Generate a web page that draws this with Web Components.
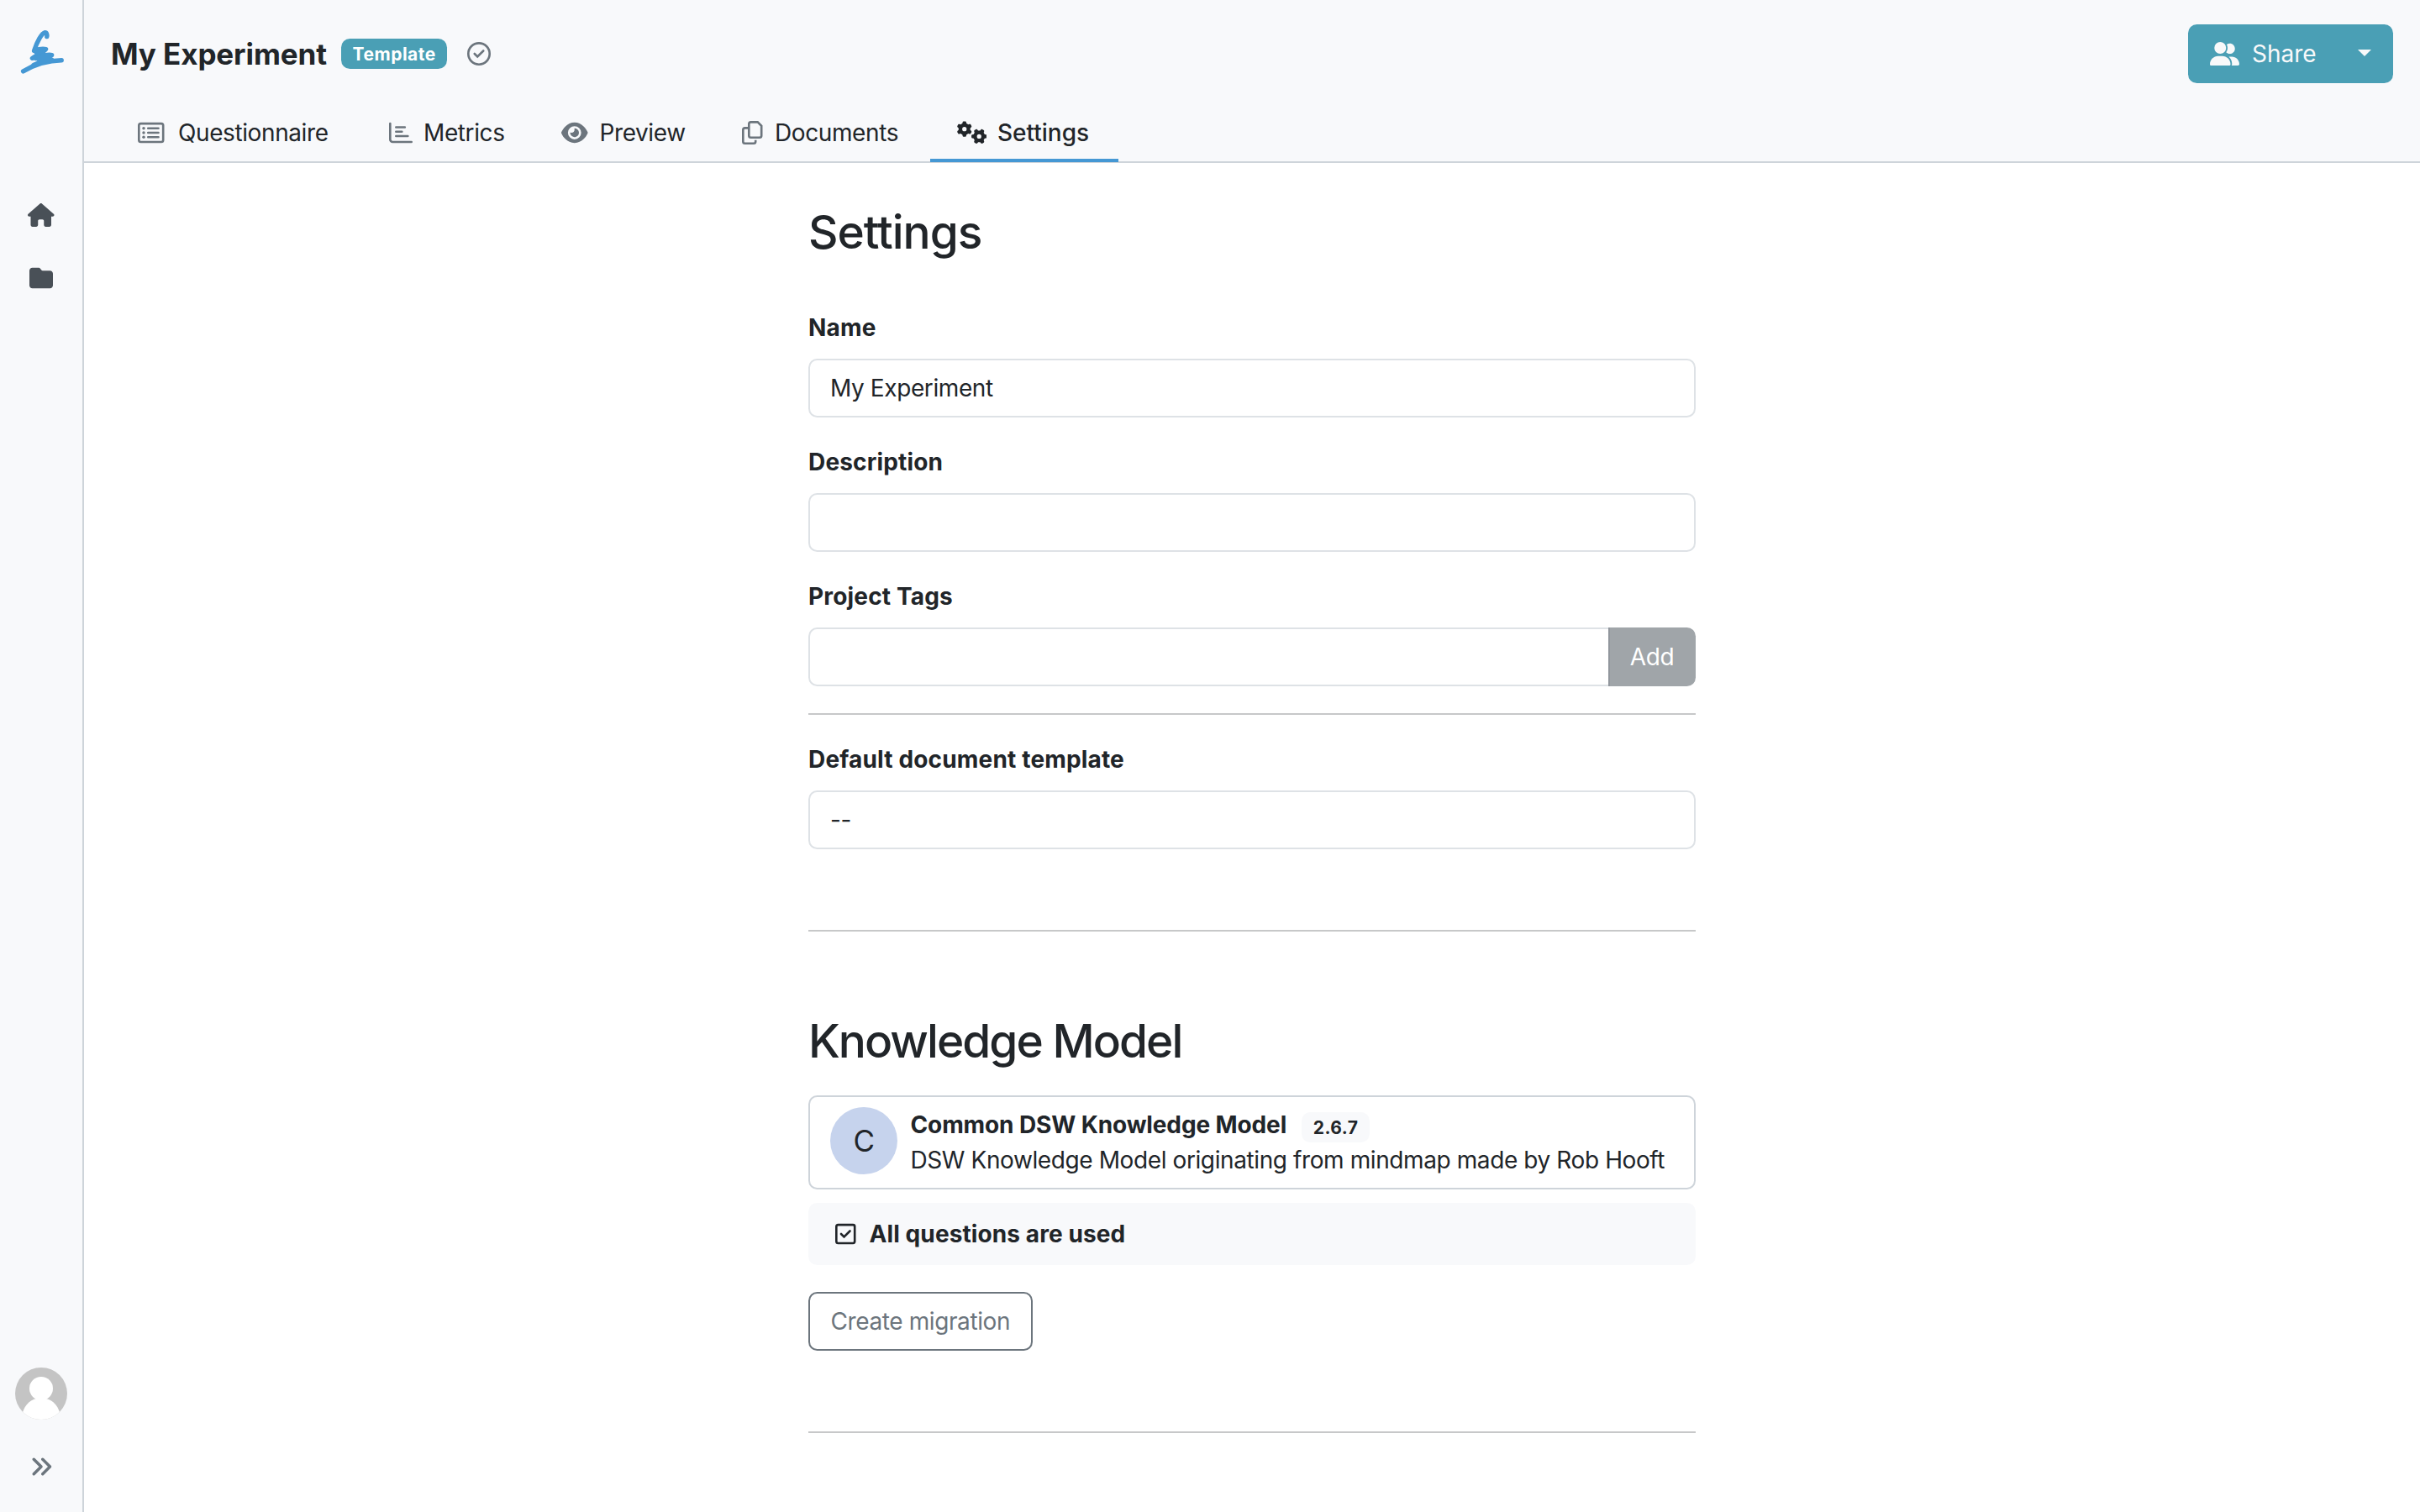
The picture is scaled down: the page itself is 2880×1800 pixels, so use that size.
<!DOCTYPE html>
<html lang="en">
<head>
<meta charset="utf-8">
<title>My Experiment</title>
<style>
    :root {
        --light: #f8f9fb;
        --line: #ced4da;
        --field: #dee2e6;
        --gray: #6c757d;
        --dark: #212529;
        --teal: #4a9fb5;
        --blue: #4598d4;
    }

    body {
        margin: 0;
        height: 1800px;
        overflow: hidden;
        background: #fff;
        color: var(--dark);
        font: 400 28px/42px Inter, "Liberation Sans", sans-serif;
        letter-spacing: -0.4px;
    }
</style>
</head>
<body>
<app-layout>
    <side-bar slot="side"></side-bar>
    <project-header slot="header" name="My Experiment" badge="Template">
        <nav-tab icon="list" style="width: 295px; --gap: 16.5px">Questionnaire</nav-tab>
        <nav-tab icon="chart" style="width: 201px">Metrics</nav-tab>
        <nav-tab icon="eye" style="width: 211px; --gap: 14px">Preview</nav-tab>
        <nav-tab icon="copy" style="width: 252px; --gap: 14.5px">Documents</nav-tab>
        <nav-tab icon="gears" style="width: 224px" active>Settings</nav-tab>
    </project-header>

    <section-title style="margin-bottom: 59px; letter-spacing: -1px">Settings</section-title>
    <form-field label="Name" value="My Experiment"></form-field>
    <form-field label="Description"></form-field>
    <form-field label="Project Tags" action="Add"></form-field>
    <line-break style="margin-bottom: 32px"></line-break>
    <form-field label="Default document template" value="--"></form-field>
    <line-break style="margin: 96px 0"></line-break>

    <section-title style="margin-bottom: 31px; letter-spacing: -1.95px">Knowledge Model</section-title>
    <model-card letter="C" name="Common DSW Knowledge Model" version="2.6.7">DSW Knowledge Model originating from mindmap made by Rob Hooft</model-card>
    <info-bar icon="square-check">All questions are used</info-bar>
    <outline-button>Create migration</outline-button>
    <line-break style="margin-top: 96px"></line-break>
</app-layout>

<script>
const gear = "M308.5 135.3c7.1-6.3 9.9-16.2 6.2-25c-2.3-5.3-4.8-10.5-7.6-15.5L304 89.4c-3-5-6.3-9.9-9.8-14.6c-5.7-7.6-15.7-10.1-24.7-7.1l-28.2 9.3c-10.7-8.8-23-16-36.2-20.9L199 27.1c-1.9-9.3-9.1-16.7-18.5-17.8C173.9 8.4 167.2 8 160.4 8h-.7c-6.8 0-13.5 .4-20.1 1.2c-9.4 1.1-16.6 8.6-18.5 17.8L115 56.1c-13.3 5-25.5 12.1-36.2 20.9L50.5 67.8c-9-3-19-.5-24.7 7.1c-3.5 4.7-6.8 9.6-9.9 14.6l-3 5.3c-2.8 5-5.3 10.2-7.6 15.6c-3.7 8.7-.9 18.6 6.2 25l22.2 19.8C32.6 161.9 32 168.9 32 176s.6 14.1 1.7 20.9L11.5 216.7c-7.1 6.3-9.9 16.2-6.2 25c2.3 5.3 4.8 10.5 7.6 15.6l3 5.2c3 5.1 6.3 9.9 9.9 14.6c5.7 7.6 15.7 10.1 24.7 7.1l28.2-9.3c10.7 8.8 23 16 36.2 20.9l6.1 29.1c1.9 9.3 9.1 16.7 18.5 17.8c6.7 .8 13.5 1.2 20.4 1.2s13.7-.4 20.4-1.2c9.4-1.1 16.6-8.6 18.5-17.8l6.1-29.1c13.3-5 25.5-12.1 36.2-20.9l28.2 9.3c9 3 19 .5 24.7-7.1c3.5-4.7 6.8-9.5 9.8-14.6l3.1-5.4c2.8-5 5.3-10.2 7.6-15.5c3.7-8.7 .9-18.6-6.2-25l-22.2-19.8c1.1-6.8 1.7-13.8 1.7-20.9s-.6-14.1-1.7-20.9l22.2-19.8zM112 176a48 48 0 1 1 96 0 48 48 0 1 1 -96 0z";
const line = 'fill="none" stroke="currentColor" stroke-width="48"';

// [viewBox width, markup], every icon is 512 units high
const icons = {
    "house": [576, '<path d="M575.8 255.5c0 18-15 32.1-32 32.1h-32l.7 160.2c0 2.7-.2 5.4-.5 8.1V472c0 22.1-17.9 40-40 40H456c-1.1 0-2.2 0-3.3-.1c-1.4 .1-2.8 .1-4.2 .1H416 392c-22.1 0-40-17.9-40-40V448 384c0-17.7-14.3-32-32-32H256c-17.7 0-32 14.3-32 32v64 24c0 22.1-17.9 40-40 40H160 128.1c-1.5 0-3-.1-4.5-.2c-1.2 .1-2.4 .2-3.6 .2H104c-22.1 0-40-17.9-40-40V360c0-.9 0-1.9 .1-2.8V287.6H32c-18 0-32-14-32-32.1c0-9 3-17 10-24L266.4 8c7-7 15-8 22-8s15 2 21 7L564.8 231.5c8 7 12 15 11 24z"/>'],
    "folder": [512, '<path d="M64 480H448c35.3 0 64-28.7 64-64V160c0-35.3-28.7-64-64-64H288c-10.1 0-19.6-4.7-25.6-12.8L243.2 57.6C231.1 41.5 212.1 32 192 32H64C28.7 32 0 60.7 0 96V416c0 35.3 28.7 64 64 64z"/>'],
    "angles": [512, '<path d="M470.6 278.6c12.5-12.5 12.5-32.8 0-45.3l-160-160c-12.5-12.5-32.8-12.5-45.3 0s-12.5 32.8 0 45.3L402.7 256 265.4 393.4c-12.5 12.5-12.5 32.8 0 45.3s32.8 12.5 45.3 0l160-160zm-352 160l160-160c12.5-12.5 12.5-32.8 0-45.3l-160-160c-12.5-12.5-32.8-12.5-45.3 0s-12.5 32.8 0 45.3L210.7 256 73.4 393.4c-12.5 12.5-12.5 32.8 0 45.3s32.8 12.5 45.3 0z"/>'],
    "users": [640, '<path d="M96 128a128 128 0 1 1 256 0A128 128 0 1 1 96 128zM0 482.3C0 383.8 79.8 304 178.3 304h91.4C368.2 304 448 383.8 448 482.3c0 16.4-13.3 29.7-29.7 29.7H29.7C13.3 512 0 498.7 0 482.3zM609.3 512H471.4c5.4-9.4 8.6-20.3 8.6-32v-8c0-60.7-27.1-115.2-69.8-151.8c2.4-.1 4.7-.2 7.1-.2h61.4C567.8 320 640 392.2 640 481.3c0 17-13.8 30.7-30.7 30.7zM432 256c-31 0-59-12.6-79.3-32.9C372.4 196.5 384 163.6 384 128c0-26.8-6.6-52.1-18.3-74.3C384.3 40.1 407.2 32 432 32c61.9 0 112 50.1 112 112s-50.1 112-112 112z"/>'],
    "eye": [576, '<path d="M288 32c-80.8 0-145.5 36.8-192.6 80.6C48.6 156 17.3 208 2.5 243.7c-3.3 7.9-3.3 16.7 0 24.6C17.3 304 48.6 356 95.4 399.4C142.5 443.2 207.2 480 288 480s145.5-36.8 192.6-80.6c46.8-43.5 78.1-95.4 93-131.1c3.3-7.9 3.3-16.7 0-24.6c-14.9-35.7-46.2-87.7-93-131.1C433.5 68.8 368.8 32 288 32zM144 256a144 144 0 1 1 288 0 144 144 0 1 1 -288 0zm144-64c0 35.3-28.7 64-64 64c-7.1 0-13.9-1.2-20.3-3.3c-5.5-1.8-11.9 1.6-11.7 7.4c.3 6.9 1.3 13.8 3.2 20.7c13.7 51.2 66.4 81.6 117.6 67.9s81.6-66.4 67.9-117.6c-11.1-41.5-47.8-69.4-88.6-71.1c-5.8-.2-9.2 6.1-7.4 11.7c2.1 6.4 3.3 13.2 3.3 20.3z"/>'],
    "gears": [640, `<path d="${gear}"/><path transform="translate(480 336) rotate(90) translate(-160 -176)" d="${gear}"/>`],
    "list": [576, `<rect x="24" y="56" width="528" height="400" rx="40" ${line}/><circle cx="128" cy="160" r="32"/><circle cx="128" cy="256" r="32"/><circle cx="128" cy="352" r="32"/><path ${line} stroke-linecap="round" d="M224 160H448M224 256H448M224 352H448"/>`],
    "chart": [512, `<path ${line} stroke-linecap="round" d="M24 56V400a56 56 0 0 0 56 56H488M152 136H344M152 232H280M152 328H408"/>`],
    "copy": [448, `<path ${line} d="M192 24H342L424 106V320a40 40 0 0 1-40 40H192a40 40 0 0 1-40-40V64a40 40 0 0 1 40-40zM128 152H64a40 40 0 0 0-40 40V448a40 40 0 0 0 40 40H256a40 40 0 0 0 40-40V416"/>`],
    "circle-check": [512, `<circle cx="256" cy="256" r="232" ${line}/><path ${line} stroke-linecap="round" d="M160 256L224 320L352 192"/>`],
    "square-check": [448, `<rect x="24" y="56" width="400" height="400" rx="40" ${line}/><path ${line} stroke-linecap="round" d="M128 256L192 320L320 192"/>`],
};

class Base extends HTMLElement {
    connectedCallback() {
        if (this.shadowRoot) {return}
        const shadow = this.attachShadow({ mode: "open" });
        const template = document.createElement("template");
        template.innerHTML = this.render();
        shadow.append(template.content.cloneNode(true));
    }

    attr(name) {
        return this.getAttribute(name) || "";
    }
}

class UiIcon extends Base {
    render() {
        const [width, markup] = icons[this.attr("name")];
        return `
<style>
    :host { display: block; flex: none; font-size: 28px; }
    svg { display: block; height: 1em; width: ${width / 512}em; }
</style>
<svg viewBox="0 0 ${width} 512" fill="currentColor">${markup}</svg>`;
    }
}

class AppLayout extends Base {
    render() {
        return `
<style>
    :host { display: grid; grid-template-columns: 100px 1fr; height: 1800px; }
    .page { display: flex; flex-direction: column; min-width: 0; }
    main { width: 1056px; margin: 0 auto; padding-top: 48px; }
</style>
<slot name="side"></slot>
<div class="page">
    <slot name="header"></slot>
    <main><slot></slot></main>
</div>`;
    }
}

class SideBar extends Base {
    render() {
        return `
<style>
    :host {
        display: flex;
        flex-direction: column;
        align-items: center;
        box-sizing: border-box;
        height: 1800px;
        padding: 34px 0 40px;
        background: var(--light);
        border-right: 2px solid var(--line);
        color: #495057;
    }
    .logo { width: 54px; height: 56px; margin-left: 2px; }
    nav { display: flex; flex-direction: column; align-items: center; gap: 47px; margin-top: 152px; }
    .bottom { display: flex; flex-direction: column; align-items: center; gap: 42px; margin-top: auto; color: var(--gray); }
    .avatar { display: block; width: 62px; height: 62px; }
</style>
<svg class="logo" viewBox="23 34 54 56" fill="none" stroke="var(--blue)" stroke-width="5.4" stroke-linecap="round" stroke-linejoin="round">
    <path d="M55.8 43.6C56.2 41 55.5 38.6 53.6 38.6C49.5 39.5 44 50 40.6 60.4C45 58.8 51 57.6 54.6 58.6C52 62.4 43 66.4 38.4 69.4C45 68 56 63.9 61.6 65.6C58 68.6 51 70.8 46.5 74"/>
    <path d="M73.2 71.8C56 72 43 76 27.6 84.8"/>
    <path d="M62 71.4C53 72 46 74.6 40 77.5M43 62.5L52 60.5M43 69.6L56 67.6"/>
</svg>
<nav>
    <ui-icon name="house"></ui-icon>
    <ui-icon name="folder"></ui-icon>
</nav>
<div class="bottom">
    <svg class="avatar" viewBox="0 0 62 62">
        <clipPath id="round"><circle cx="31" cy="31" r="31"/></clipPath>
        <g clip-path="url(#round)">
            <rect width="62" height="62" fill="#c4c4c4"/>
            <circle cx="31" cy="25" r="14" fill="#fff"/>
            <path fill="#fff" d="M7 62C9 46 17 39 25 37H37C45 39 53 46 55 62z"/>
        </g>
    </svg>
    <ui-icon name="angles"></ui-icon>
</div>`;
    }
}

class ProjectHeader extends Base {
    render() {
        return `
<style>
    :host {
        display: flex;
        flex-direction: column;
        gap: 24px;
        box-sizing: border-box;
        height: 194px;
        padding: 29px 32px 0;
        background: var(--light);
        border-bottom: 2px solid var(--line);
    }
    .top { display: flex; align-items: center; height: 70px; }
    h1 { width: 274px; margin: 0; font-size: 35px; font-weight: 700; letter-spacing: -0.1px; white-space: nowrap; }
    .check { margin-left: 24px; color: var(--gray); }
    share-button { margin-left: auto; }
    nav { display: flex; gap: 4px; }
</style>
<div class="top">
    <h1>${this.attr("name")}</h1>
    <ui-badge style="--bg: var(--teal); --fg: #fff">${this.attr("badge")}</ui-badge>
    <ui-icon class="check" name="circle-check"></ui-icon>
    <share-button>Share</share-button>
</div>
<nav><slot></slot></nav>`;
    }
}

class UiBadge extends Base {
    render() {
        return `
<style>
    :host {
        display: block;
        padding: 7.5px 13.6px;
        border-radius: 10.5px;
        background: var(--bg, var(--light));
        color: var(--fg, var(--dark));
        font-size: 21px;
        line-height: 21px;
        font-weight: 700;
        letter-spacing: 0.5px;
    }
</style>
<slot></slot>`;
    }
}

class ShareButton extends Base {
    render() {
        return `
<style>
    :host {
        display: flex;
        align-items: center;
        box-sizing: border-box;
        width: 244px;
        height: 70px;
        padding: 0 26px;
        border-radius: 10.5px;
        background: var(--teal);
        color: #f8f9fa;
        letter-spacing: 0;
    }
    span { margin-left: 15px; }
    .caret {
        margin: -2px 0 0 auto;
        border: 8px solid transparent;
        border-top-color: currentColor;
        border-bottom: 0;
    }
</style>
<ui-icon name="users"></ui-icon>
<span><slot></slot></span>
<i class="caret"></i>`;
    }
}

class NavTab extends Base {
    render() {
        const active = this.hasAttribute("active");
        return `
<style>
    :host {
        display: flex;
        align-items: center;
        gap: var(--gap, 13px);
        box-sizing: border-box;
        height: 70px;
        padding: 0 0 0 32px;
        ${active ? "box-shadow: inset 0 -4px var(--blue); font-weight: 500; letter-spacing: 0;" : ""}
    }
    ui-icon { color: ${active ? "var(--dark)" : "var(--gray)"}; }
</style>
<ui-icon name="${this.attr("icon")}"></ui-icon>
<span><slot></slot></span>`;
    }
}

class SectionTitle extends Base {
    render() {
        return `
<style>
    :host { display: block; }
    h2 { margin: 0; font-size: 55px; line-height: 68px; font-weight: 500; }
</style>
<h2><slot></slot></h2>`;
    }
}

class FormField extends Base {
    render() {
        const action = this.attr("action");
        return `
<style>
    :host { display: block; margin-bottom: 32px; }
    label { display: block; margin-bottom: 16px; font-weight: 700; letter-spacing: 0.17px; }
    .group { display: flex; }
    .input {
        flex: 1;
        box-sizing: border-box;
        height: 70px;
        padding: 12px 24px;
        border: 2px solid var(--field);
        border-radius: 10.5px;
    }
    .joined { border-right: 0; border-radius: 10.5px 0 0 10.5px; }
    .action {
        box-sizing: border-box;
        width: 104px;
        padding: 14px 2px 14px 0;
        border-left: 2px solid #92979d;
        border-radius: 0 10.5px 10.5px 0;
        background: #a0a5a9;
        color: #fff;
        text-align: center;
    }
</style>
<label>${this.attr("label")}</label>
<div class="group">
    <div class="input ${action ? "joined" : ""}">${this.attr("value")}</div>
    ${action ? `<div class="action">${action}</div>` : ""}
</div>`;
    }
}

class LineBreak extends Base {
    render() {
        return `<style>:host { display: block; height: 2px; background: #c7c8c9; }</style>`;
    }
}

class ModelCard extends Base {
    render() {
        return `
<style>
    :host {
        display: flex;
        gap: 15.5px;
        box-sizing: border-box;
        height: 112px;
        padding: 12px 24px;
        border: 2px solid var(--line);
        border-radius: 10.5px;
        white-space: nowrap;
    }
    .letter {
        flex: none;
        width: 80px;
        height: 80px;
        border-radius: 50%;
        background: #c6d3ed;
        font-size: 35px;
        line-height: 80px;
        text-align: center;
    }
    .name { display: flex; height: 42px; font-weight: 700; letter-spacing: -0.12px; }
    ui-badge { height: 21px; margin: 6px 0 0 18px; }
</style>
<div class="letter">${this.attr("letter")}</div>
<div>
    <div class="name">${this.attr("name")}<ui-badge>${this.attr("version")}</ui-badge></div>
    <div><slot></slot></div>
</div>`;
    }
}

class InfoBar extends Base {
    render() {
        return `
<style>
    :host {
        display: flex;
        align-items: center;
        gap: 16px;
        margin: 16px 0 32px;
        padding: 16px 32px;
        border-radius: 10.5px;
        background: var(--light);
        font-weight: 700;
        letter-spacing: 0.1px;
    }
</style>
<ui-icon name="${this.attr("icon")}"></ui-icon>
<span><slot></slot></span>`;
    }
}

class OutlineButton extends Base {
    render() {
        return `
<style>
    :host {
        display: block;
        width: fit-content;
        padding: 12px 24.5px;
        border: 2px solid var(--gray);
        border-radius: 10.5px;
        color: var(--gray);
    }
</style>
<slot></slot>`;
    }
}

customElements.define("ui-icon", UiIcon);
customElements.define("ui-badge", UiBadge);
customElements.define("share-button", ShareButton);
customElements.define("nav-tab", NavTab);
customElements.define("side-bar", SideBar);
customElements.define("project-header", ProjectHeader);
customElements.define("section-title", SectionTitle);
customElements.define("form-field", FormField);
customElements.define("line-break", LineBreak);
customElements.define("model-card", ModelCard);
customElements.define("info-bar", InfoBar);
customElements.define("outline-button", OutlineButton);
customElements.define("app-layout", AppLayout);
</script>
</body>
</html>
